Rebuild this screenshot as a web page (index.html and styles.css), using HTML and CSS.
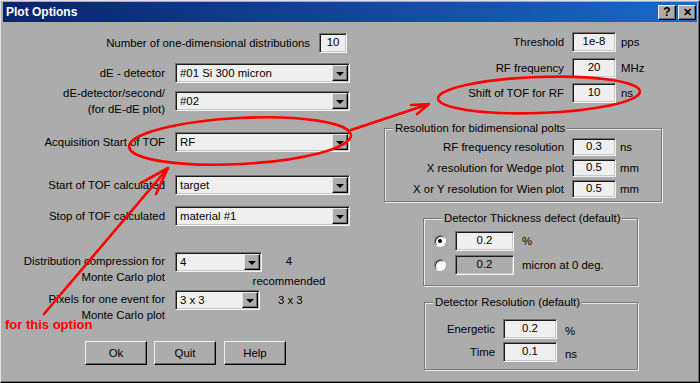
FILE: index.html
```html
<!DOCTYPE html>
<html>
<head>
<meta charset="utf-8">
<title>Plot Options</title>
<link rel="stylesheet" href="styles.css">
</head>
<body>
<div class="window">
  <div class="titlebar">
    <span class="title">Plot Options</span>
    <div class="tbtns"><span class="tbtn">?</span><span class="tbtn close">✕</span></div>
  </div>
  <div class="content">
    <div class="left">
      <div class="row row-num"><span class="lab-num">Number of one-dimensional distributions</span><span class="tb">10</span></div>
      <div class="row r2"><span class="lab">dE - detector</span><div class="combo"><span class="val">#01 Si 300 micron</span><span class="dd"></span></div></div>
      <div class="row r3"><span class="lab">dE-detector/second/<br>(for dE-dE plot)</span><div class="combo"><span class="val">#02</span><span class="dd"></span></div></div>
      <div class="row r4"><span class="lab">Acquisition Start of TOF</span><div class="combo"><span class="val">RF</span><span class="dd"></span></div></div>
      <div class="row r5"><span class="lab">Start of TOF calculated</span><div class="combo"><span class="val">target</span><span class="dd"></span></div></div>
      <div class="row r6"><span class="lab">Stop of TOF calculated</span><div class="combo"><span class="val">material #1</span><span class="dd"></span></div></div>
      <div class="row top r7"><span class="lab">Distribution compression for<br>Monte Carlo plot</span><div class="combo w87"><span class="val">4</span><span class="dd"></span></div><span class="rec">4<br>recommended</span></div>
      <div class="row top r8"><span class="lab">Pixels for one event for<br>Monte Carlo plot</span><div class="combo w85"><span class="val">3 x 3</span><span class="dd"></span></div><span class="px">3 x 3</span></div>
      <div class="btns"><span class="btn">Ok</span><span class="btn">Quit</span><span class="btn help">Help</span></div>
    </div>
    <div class="right">
      <div class="rrow"><span class="rlab">Threshold</span><span class="tb">1e-8</span><span class="unit">pps</span></div>
      <div class="rrow rr2"><span class="rlab">RF frequency</span><span class="tb">20</span><span class="unit">MHz</span></div>
      <div class="rrow rr3"><span class="rlab">Shift of TOF for RF</span><span class="tb">10</span><span class="unit">ns</span></div>
      <fieldset class="grp g1">
        <legend>Resolution for bidimensional polts</legend>
        <div class="grow"><span class="glab">RF frequency resolution</span><span class="tb small">0.3</span><span class="gunit">ns</span></div>
        <div class="grow"><span class="glab">X resolution for Wedge plot</span><span class="tb small">0.5</span><span class="gunit">mm</span></div>
        <div class="grow"><span class="glab">X or Y resolution for Wien plot</span><span class="tb small">0.5</span><span class="gunit">mm</span></div>
      </fieldset>
      <fieldset class="grp g2">
        <legend>Detector Thickness defect (default)</legend>
        <div class="trow"><span class="radio on"></span><span class="tb wide">0.2</span><span class="tunit">%</span></div>
        <div class="trow"><span class="radio"></span><span class="tb wide dis">0.2</span><span class="tunit">micron at 0 deg.</span></div>
      </fieldset>
      <fieldset class="grp g3">
        <legend>Detector Resolution (default)</legend>
        <div class="erow"><span class="elab">Energetic</span><span class="tb mid">0.2</span><span class="eunit">%</span></div>
        <div class="erow"><span class="elab">Time</span><span class="tb mid">0.1</span><span class="eunit">ns</span></div>
      </fieldset>
    </div>
  </div>
  <svg class="annot" width="700" height="383" viewBox="0 0 700 383">
    <g fill="none" stroke="#ff0000" stroke-width="2.6" stroke-linecap="round" stroke-linejoin="round">
      <ellipse cx="239" cy="140" rx="111" ry="23" transform="rotate(-3 239 140)"/>
      <ellipse cx="538" cy="94" rx="101" ry="18" transform="rotate(-2 538 94)"/>
      <path d="M350 129 L428 103 M410 104 L428 103 L416 113"/>
      <path d="M43 313 L167 167 M140 182 L167 167 L155 193"/>
    </g>
  </svg>
  <div class="note">for this option</div>
</div>
</body>
</html>
```

FILE: styles.css
```css
* { box-sizing: border-box; }
html, body { margin: 0; padding: 0; }
body {
  width: 700px; height: 383px; overflow: hidden;
  background: #acacac;
  font-family: "Liberation Sans", Arial, sans-serif;
  font-size: 11.4px; color: #000;
}
.window {
  position: relative;
  width: 700px; height: 383px;
  background: #acacac;
  border: 1px solid; border-color: #e2e2e2 #000 #000 #e2e2e2;
  padding: 1px 2px 0 2px;
  box-shadow: inset -1px -1px 0 #6b6b6b;
}
.titlebar {
  height: 20px; display: flex; align-items: center; justify-content: space-between;
  background: linear-gradient(90deg, #0a246a 0%, #1a68c8 100%);
  padding: 0 1px 0 3px;
}
.title { color: #fff; font-weight: bold; font-size: 12px; }
.tbtns { display: flex; gap: 2px; }
.tbtn {
  width: 18px; height: 15px; background: #acacac;
  border: 1px solid; border-color: #f0f0f0 #000 #000 #f0f0f0;
  box-shadow: inset -1px -1px 0 #6b6b6b;
  display: flex; align-items: center; justify-content: center;
  font-weight: bold; font-size: 12px; line-height: 1;
}
.tbtn.close { font-size: 11px; }
.content { display: flex; }
.left { width: 357px; padding-top: 11px; }
.right { flex: 1; padding-top: 10px; }

.row { display: flex; align-items: center; height: 20px; }
.row.top { align-items: flex-start; }
.row-num { justify-content: flex-end; padding-right: 13px; gap: 9px; }
.row-num .tb { width: 28px; }
.lab { width: 162px; text-align: right; line-height: 16px; flex: none; }
.row.top .lab { margin-top: 1px; }
.r2 { margin-top: 10px; }
.r3 { margin-top: 8px; }
.r4 { margin-top: 21px; }
.r5 { margin-top: 23px; }
.r6 { margin-top: 11px; }
.r7 { margin-top: 26px; }
.r8 { margin-top: 18px; }

.combo {
  flex: none; width: 175px; height: 20px; margin-left: 10px;
  background: #efefef;
  border: 1px solid; border-color: #6f6f6f #f4f4f4 #f4f4f4 #6f6f6f;
  box-shadow: inset 1px 1px 0 #1a1a1a, inset -1px -1px 0 #c8c8c8;
  display: flex; align-items: center; padding: 1px 1px 1px 2px;
}
.combo.w87 { width: 87px; }
.combo.w85 { width: 85px; }
.val { flex: 1; padding-left: 2px; white-space: nowrap; }
.dd {
  width: 16px; height: 16px; background: #acacac;
  border: 1px solid; border-color: #e6e6e6 #000 #000 #e6e6e6;
  box-shadow: inset -1px -1px 0 #6b6b6b;
  display: flex; align-items: center; justify-content: center;
}
.dd::after {
  content: ""; width: 0; height: 0;
  border-left: 4px solid transparent; border-right: 4px solid transparent;
  border-top: 4px solid #000; margin-top: 1px;
}
.rec { width: 74px; margin-left: -10px; text-align: center; line-height: 20px; margin-top: -1px; }
.px { margin-left: 18px; line-height: 20px; }

.tb {
  flex: none; width: 44px; height: 20px;
  background: #efefef;
  border: 1px solid; border-color: #6f6f6f #f4f4f4 #f4f4f4 #6f6f6f;
  box-shadow: inset 1px 1px 0 #1a1a1a, inset -1px -1px 0 #c8c8c8;
  text-align: center; line-height: 17px;
}
.tb.small { height: 18px; line-height: 15px; }
.tb.wide { width: 59px; }
.tb.mid { width: 54px; }
.tb.dis { background: #acacac; }

.btns { display: flex; padding-left: 82px; gap: 7px; margin-top: 31px; }
.btn {
  width: 62px; height: 24px;
  border: 1px solid; border-color: #f0f0f0 #000 #000 #f0f0f0;
  box-shadow: inset -1px -1px 0 #6b6b6b;
  display: flex; align-items: center; justify-content: center;
}
.btn.help { margin-left: 1px; }

.rrow { display: flex; align-items: center; height: 20px; }
.rr2 { margin-top: 6px; }
.rr3 { margin-top: 5px; }
.rlab { width: 204px; text-align: right; margin-right: 8px; }
.unit { margin-left: 5px; }

.grp {
  margin: 0; padding: 0; min-width: 0;
  border: 1px solid #787878;
  box-shadow: inset 1px 1px 0 #eaeaea, 1px 1px 0 #eaeaea;
}
.grp legend {
  padding: 0 2px; margin-left: 8px; line-height: 13px; font-size: 11.4px;
  background: #acacac;
}
.g1 { margin: 19px 0 0 24px; width: 278px; padding: 3px 0 3px 0; }
.grow { display: flex; align-items: center; height: 18px; }
.grow + .grow { margin-top: 3px; }
.glab { width: 179px; text-align: right; margin-right: 8px; }
.gunit { margin-left: 4px; }

.g2 { margin: 10px 0 0 63px; width: 215px; padding: 6px 0 10px 10px; }
.trow { display: flex; align-items: center; height: 20px; }
.trow + .trow { margin-top: 4px; }
.radio {
  width: 12px; height: 12px; border-radius: 50%; flex: none;
  background: #fff;
  border: 1px solid; border-color: #7a7a7a #f4f4f4 #f4f4f4 #7a7a7a;
  box-shadow: inset 1px 1px 0 #2a2a2a;
  display: flex; align-items: center; justify-content: center;
  margin-right: 9px;
}
.radio.on::after { content: ""; width: 4px; height: 4px; border-radius: 50%; background: #000; }
.tunit { margin-left: 8px; }

.g3 { margin: 10px 0 0 64px; width: 214px; padding: 10px 0 8px 0; }
.erow { display: flex; align-items: center; height: 19px; }
.erow + .erow { margin-top: 4px; }
.elab { width: 70px; text-align: right; margin-right: 8px; }
.eunit { margin-left: 8px; margin-top: 4px; }

.annot { position: absolute; left: 0; top: 0; pointer-events: none; }
.note {
  position: absolute; left: 4px; top: 316px;
  color: #ff0000; font-weight: bold; font-size: 13px; line-height: 16px;
}
```
